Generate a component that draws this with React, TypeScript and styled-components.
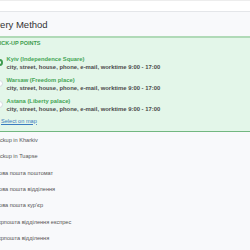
import styled, { createGlobalStyle } from 'styled-components';

const GlobalStyle = createGlobalStyle`
  html, body {
    margin: 0;
    padding: 0;
    background: #f8f9fb;
    overflow: hidden;
  }
`;

interface PickupPoint {
  title: string;
  address: string;
}

const pickupPoints: PickupPoint[] = [
  { title: 'Kyiv (Independence Square)', address: 'city, street, house, phone, e-mail, worktime 9:00 - 17:00' },
  { title: 'Warsaw (Freedom place)', address: 'city, street, house, phone, e-mail, worktime 9:00 - 17:00' },
  { title: 'Astana (Liberty palace)', address: 'city, street, house, phone, e-mail, worktime 9:00 - 17:00' },
];

const methods = [
  'Pickup in Kharkiv',
  'Pickup in Tuapse',
  'Нова пошта поштомат',
  'Нова пошта відділення',
  'Нова пошта кур’єр',
  'Укрпошта відділення експрес',
  'Укрпошта відділення',
];

export default function App() {
  return (
    <>
      <GlobalStyle />
      <Page>
        <TopBar />
        <Header>Delivery Method</Header>
        <PickupPanel>
          <PanelLabel>Pick-up points</PanelLabel>
          {pickupPoints.map((p, i) => (
            <PointRow key={p.title}>
              <Radio $checked={i === 0} />
              <PointText>
                <PointTitle>{p.title}</PointTitle>
                <PointAddress>{p.address}</PointAddress>
              </PointText>
            </PointRow>
          ))}
          <MapLink href="#">Select on map</MapLink>
        </PickupPanel>
        <MethodList>
          {methods.map((m) => (
            <MethodRow key={m}>
              <Radio $checked={false} />
              <span>{m}</span>
            </MethodRow>
          ))}
        </MethodList>
      </Page>
    </>
  );
}

const Page = styled.div`
  width: 320px;
  margin-left: -30px;
  font-family: 'Liberation Sans', Arial, sans-serif;
`;

const TopBar = styled.div`
  height: 10px;
  background: #fff;
  border-top: 1px solid #ededed;
  border-bottom: 1px solid #e4e6e9;
`;

const Header = styled.div`
  height: 24px;
  display: flex;
  align-items: center;
  padding-left: 9px;
  font-size: 9.5px;
  color: #333;
  background: #f8f9fb;
`;

const PickupPanel = styled.div`
  display: flex;
  flex-direction: column;
  align-items: flex-start;
  gap: 5px;
  padding: 2px 0 6px 26px;
  background: #e3f6e9;
  border-top: 2px solid #b0dab7;
  border-bottom: 1px solid #72b780;
`;

const PanelLabel = styled.div`
  font-size: 5.5px;
  line-height: 7px;
  font-weight: 700;
  text-transform: uppercase;
  color: #3d9c4e;
  margin-bottom: 2.5px;
`;

const PointRow = styled.div`
  display: flex;
  align-items: center;
  gap: 3.5px;
`;

const Radio = styled.span<{ $checked: boolean }>`
  flex: none;
  width: 7px;
  height: 7px;
  box-sizing: border-box;
  border-radius: 50%;
  background: #fff;
  border: ${({ $checked }) => ($checked ? '2px solid #3e9b4f' : '1px solid #d5d9de')};
`;

const PointText = styled.div`
  display: flex;
  flex-direction: column;
`;

const PointTitle = styled.div`
  font-size: 5.8px;
  line-height: 8px;
  font-weight: 700;
  color: #45a556;
`;

const PointAddress = styled.div`
  font-size: 5.9px;
  line-height: 8px;
  font-weight: 700;
  color: #4b4b4b;
  white-space: nowrap;
`;

const MapLink = styled.a`
  margin-left: 5px;
  font-size: 5.6px;
  line-height: 7.5px;
  color: #3b7cc0;
  text-decoration: underline;
`;

const MethodList = styled.div`
  display: flex;
  flex-direction: column;
  background: #f8f9fb;
`;

const MethodRow = styled.div`
  height: 16.3px;
  display: flex;
  align-items: center;
  gap: 5px;
  padding-left: 13px;
  font-size: 5.6px;
  color: #555;
`;
